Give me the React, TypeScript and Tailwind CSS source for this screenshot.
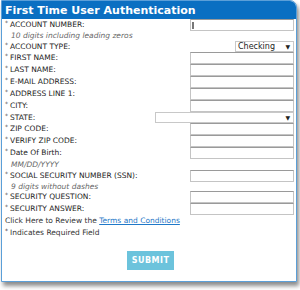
const font = { fontFamily: '"DejaVu Sans", "Liberation Sans", sans-serif' };

type Row =
  | { kind: "input"; label: string; focus?: boolean }
  | { kind: "hint"; text: string; h: string }
  | { kind: "select"; label: string; value: string; wide?: boolean };

const rows: Row[] = [
  { kind: "input", label: "ACCOUNT NUMBER:", focus: true },
  { kind: "hint", text: "10 digits including leading zeros", h: "h-[10px]" },
  { kind: "select", label: "ACCOUNT TYPE:", value: "Checking" },
  { kind: "input", label: "FIRST NAME:" },
  { kind: "input", label: "LAST NAME:" },
  { kind: "input", label: "E-MAIL ADDRESS:" },
  { kind: "input", label: "ADDRESS LINE 1:" },
  { kind: "input", label: "CITY:" },
  { kind: "select", label: "STATE:", value: "", wide: true },
  { kind: "input", label: "ZIP CODE:" },
  { kind: "input", label: "VERIFY ZIP CODE:" },
  { kind: "input", label: "Date Of Birth:" },
  { kind: "hint", text: "MM/DD/YYYY", h: "h-[11px]" },
  { kind: "input", label: "SOCIAL SECURITY NUMBER (SSN):" },
  { kind: "hint", text: "9 digits without dashes", h: "h-[9px]" },
  { kind: "input", label: "SECURITY QUESTION:" },
  { kind: "input", label: "SECURITY ANSWER:" },
];

function Label({ text }: { text: string }) {
  return (
    <span className="flex items-start text-[7.5px] leading-none text-[#222] whitespace-nowrap">
      <span className="w-[5px] text-[6px] -mt-[1px] text-[#555]">*</span>
      {text}
    </span>
  );
}

export default function App() {
  return (
    <div className="w-[300px] h-[290px] bg-white pt-0 pl-[1px]" style={font}>
      <div className="w-[296px] h-[282px] border border-[#5b9fd8] rounded-tr-[7px] shadow-[2px_4px_4px_rgba(0,0,0,0.45)] bg-white flex flex-col">
        <div className="h-[18px] bg-[#0a6fc2] rounded-tr-[6px] flex items-center px-[3px] text-white font-bold text-[11px] leading-none">
          First Time User Authentication
        </div>
        <div className="flex flex-col pl-[3px] pr-[2px]">
          {rows.map((r, i) => {
            if (r.kind === "hint")
              return (
                <div key={i} className={`${r.h} flex items-center pl-[6px] italic text-[7.5px] leading-none text-[#666]`}>
                  {r.text}
                </div>
              );
            if (r.kind === "select")
              return (
                <div key={i} className={`${r.wide ? "h-[11px]" : "h-[11px]"} flex items-center justify-between`}>
                  <Label text={r.label} />
                  <div
                    className={`${r.wide ? "w-[139px]" : "w-[59px]"} h-[11px] border border-[#c8c8c8] bg-white flex items-center justify-between pl-[2px] pr-[3px] text-[8px] leading-none text-[#222]`}
                  >
                    <span>{r.value}</span>
                    <span className="text-[6px]">▼</span>
                  </div>
                </div>
              );
            return (
              <div key={i} className="h-[12px] flex items-center justify-between">
                <Label text={r.label} />
                <div className="relative w-[104px] h-[12px] border border-[#c4c4c4] border-t-[#9a9a9a] bg-white">
                  {r.focus && <div className="absolute left-[1px] top-[2px] w-[2px] h-[7px] bg-[#777]" />}
                </div>
              </div>
            );
          })}
          <div className="h-[12px] flex items-center text-[7.5px] leading-none text-[#333] whitespace-nowrap">
            Click Here to Review the&nbsp;
            <a className="text-[#1f78c8] underline">Terms and Conditions</a>
          </div>
          <div className="h-[12px] flex items-center">
            <span className="flex items-start text-[7.5px] leading-none text-[#333]">
              <span className="w-[5px] text-[6px] -mt-[1px]">*</span>Indicates Required Field
            </span>
          </div>
          <div className="flex justify-center mt-[12px]">
            <button className="w-[47px] h-[19px] bg-[#6cc3dc] text-white font-bold text-[8px] tracking-[0.5px] ml-[2px]">
              SUBMIT
            </button>
          </div>
        </div>
      </div>
    </div>
  );
}
